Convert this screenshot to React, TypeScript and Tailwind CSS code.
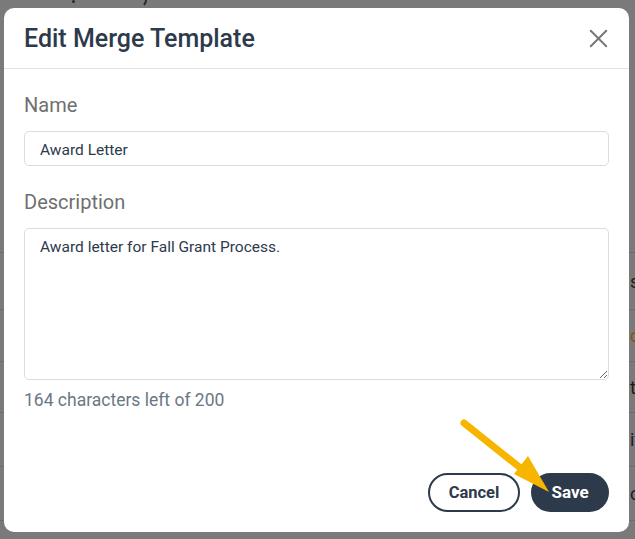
import { X } from "lucide-react";

const rows = [
  { h: "h-[57px]", text: "sub", color: "text-[#1c1c1c]" },
  { h: "h-[52px]", text: "c", color: "text-[#7a5a12]" },
  { h: "h-[51px]", text: "tl", color: "text-[#1c1c1c]" },
  { h: "h-[54px]", text: "it", color: "text-[#1c1c1c]" },
  { h: "h-[54px]", text: "c", color: "text-[#1c1c1c]" },
];

export default function App() {
  return (
    <div
      className="relative h-[539px] w-[635px] overflow-hidden bg-[#7a7a7a]"
      style={{ fontFamily: "Roboto, 'Liberation Sans', sans-serif" }}
    >
      {/* page behind the overlay */}
      <div className="flex h-[8px] items-start pl-[72px]">
        <div className="h-[3px] w-[3px] rounded-full bg-[#2a2a2a]" />
        <div className="ml-[60px] h-[8px] w-[12px] rounded-br-full border-b-2 border-r-2 border-[#2a2a2a] border-b-transparent" />
      </div>
      <div className="h-[245px] border-b border-[#6c6c6c]" />
      {rows.map((r, i) => (
        <div
          key={i}
          className={`${r.h} flex items-center whitespace-nowrap border-b border-[#6c6c6c] pl-[630px] text-[18px] ${r.color}`}
        >
          {r.text}
        </div>
      ))}

      {/* modal */}
      <div className="absolute left-[4px] top-[8px] flex h-[524px] w-[625px] flex-col rounded-[10px] bg-white">
        <div className="flex h-[61px] items-center justify-between border-b border-[#e2e2e2] pl-[20px] pr-[15px]">
          <h2 className="pt-[2px] text-[25px] font-medium text-[#2d3a4b]">Edit Merge Template</h2>
          <button className="text-[#777777]">
            <X size={31} strokeWidth={1.5} />
          </button>
        </div>

        <div className="flex flex-1 flex-col px-[20px] pb-[20px] pt-[22px]">
          <label className="text-[20px] leading-[28px] text-[#6f6f6f]">Name</label>
          <input
            defaultValue="Award Letter"
            className="mt-[12px] h-[35px] w-[585px] rounded-[5px] border border-[#dcdcdc] px-[15px] pt-[2px] text-[15.5px] text-[#2d3a4b] outline-none"
          />

          <label className="mt-[22px] text-[20px] leading-[28px] text-[#6f6f6f]">Description</label>
          <textarea
            defaultValue="Award letter for Fall Grant Process."
            className="mt-[12px] h-[152px] w-[585px] rounded-[5px] border border-[#dcdcdc] px-[15px] py-[7px] text-[15.5px] leading-[22px] text-[#2d3a4b] outline-none"
          />
          <div className="mt-[8px] text-[17.5px] leading-[24px] text-[#6b7785]">164 characters left of 200</div>

          <div className="mt-auto flex justify-end gap-[11px]">
            <button className="h-[39px] w-[92px] rounded-full border-2 border-[#2d3a4b] pt-[2px] text-[16.5px] font-bold text-[#2d3a4b]">
              Cancel
            </button>
            <button className="h-[39px] w-[78px] rounded-full bg-[#2d3a4b] pt-[1px] text-[17px] font-bold text-white">
              Save
            </button>
          </div>
        </div>
      </div>

      {/* pointer arrow */}
      <svg className="absolute left-0 top-0" width="635" height="539" viewBox="0 0 635 539">
        <line x1="464" y1="423" x2="528" y2="474" stroke="#f7b500" strokeWidth="7" strokeLinecap="round" />
        <polygon points="549,492 514,474 528,456" fill="#f7b500" />
      </svg>
    </div>
  );
}
